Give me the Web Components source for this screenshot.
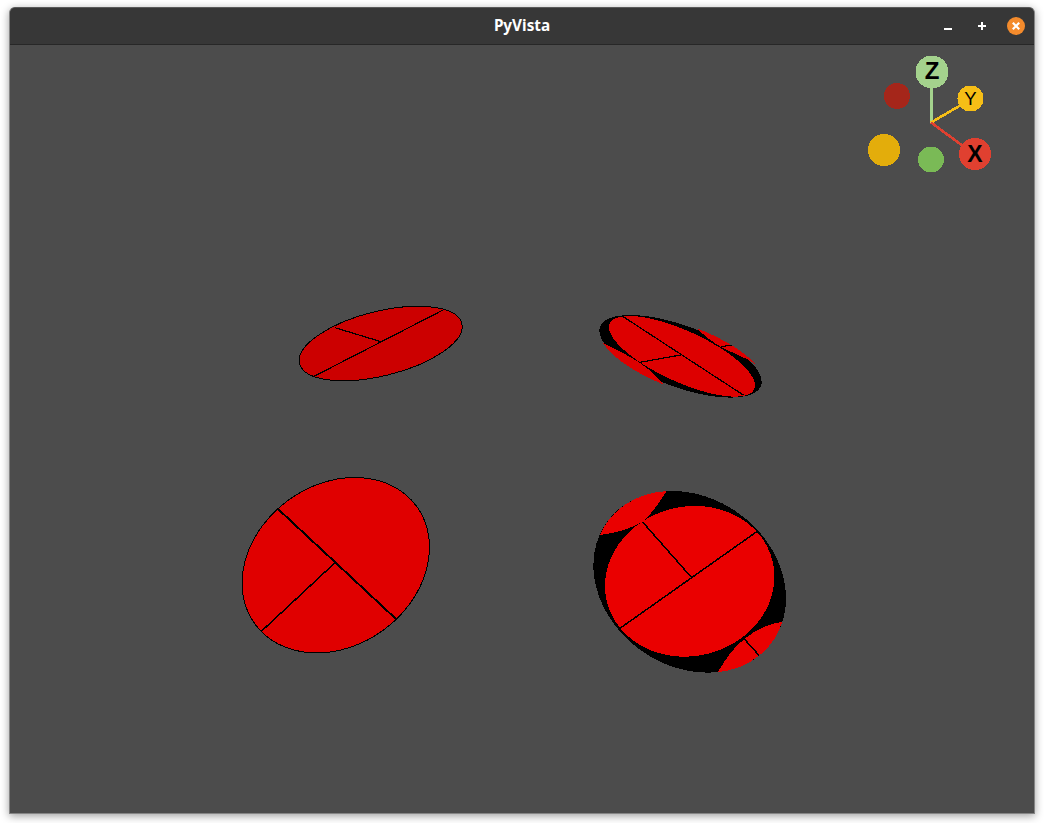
<!DOCTYPE html>
<html>
<head>
<meta charset="utf-8">
<title>PyVista</title>
<style>
  html, body { margin: 0; padding: 0; background: #fff; }
</style>
</head>
<body>
<app-window heading="PyVista">
  <plot-view></plot-view>
</app-window>

<script>
class TitleBar extends HTMLElement {
  constructor() {
    super();
    this.shadowDOM = this.attachShadow({mode: "open"});
  }

  connectedCallback() {
    this.render();
  }

  render() {
    this.shadowDOM.innerHTML = `
    <style>
      :host {
        display: grid;
        grid-template-columns: 1fr auto 1fr;
        align-items: center;
        height: 37px;
        box-sizing: border-box;
        background: #373737;
        border-bottom: 1px solid #272727;
        border-radius: 5px 5px 0 0;
        font: 700 15.3px "Noto Sans", sans-serif;
        color: #fff;
      }
      .title { grid-column: 2; margin-top: -2px; }
      .buttons {
        grid-column: 3;
        justify-self: end;
        display: flex;
        align-items: center;
        gap: 14px;
        padding-right: 8px;
      }
      .btn { display: block; width: 20px; height: 20px; }
    </style>
    <div class="title">${this.getAttribute("heading")}</div>
    <div class="buttons">
      <svg class="btn" viewBox="0 0 20 20"><rect x="6" y="12" width="8" height="2" fill="#fff"/></svg>
      <svg class="btn" viewBox="0 0 20 20"><path d="M6 10h8M10 6v8" stroke="#fff" stroke-width="2"/></svg>
      <svg class="btn" viewBox="0 0 20 20">
        <circle cx="10" cy="10" r="9" fill="#f48b2c"/>
        <path d="M6.8 6.8l6.4 6.4M13.2 6.8l-6.4 6.4" stroke="#fff" stroke-width="2.2"/>
      </svg>
    </div>
    `;
  }
}

class AppWindow extends HTMLElement {
  constructor() {
    super();
    this.shadowDOM = this.attachShadow({mode: "open"});
  }

  connectedCallback() {
    this.render();
  }

  render() {
    this.shadowDOM.innerHTML = `
    <style>
      :host {
        display: block;
        padding: 7px 9px 9px 9px;
        height: 823px;
        box-sizing: border-box;
      }
      .frame {
        display: flex;
        flex-direction: column;
        height: 807px;
        box-sizing: border-box;
        border: 1px solid #858585;
        border-top-color: #5a5a5a;
        border-radius: 6px 6px 0 0;
        background: #4c4c4c;
        box-shadow: 0 2px 9px rgba(0, 0, 0, .38);
      }
      ::slotted(*) { flex: 1; }
    </style>
    <div class="frame">
      <title-bar heading="${this.getAttribute("heading")}"></title-bar>
      <slot></slot>
    </div>
    `;
  }
}

class AxesWidget extends HTMLElement {
  constructor() {
    super();
    this.shadowDOM = this.attachShadow({mode: "open"});
  }

  connectedCallback() {
    this.render();
  }

  render() {
    // svg box starts at 860,50 in page coords
    this.shadowDOM.innerHTML = `
    <style>
      :host { position: absolute; top: 5px; right: 34px; width: 140px; height: 130px; }
      svg { display: block; }
      text { font-family: "Liberation Sans", sans-serif; fill: #000; text-anchor: middle; }
    </style>
    <svg width="140" height="130" viewBox="860 50 140 130" shape-rendering="crispEdges">
      <line x1="931" y1="122.5" x2="931" y2="88" stroke="#a4d28d" stroke-width="3"/>
      <line x1="931" y1="122.5" x2="961" y2="105" stroke="#f6be16" stroke-width="2.6"/>
      <line x1="931" y1="122.5" x2="963" y2="146" stroke="#e04030" stroke-width="2.6"/>
      <circle cx="897" cy="96" r="13" fill="#a5261a"/>
      <circle cx="884" cy="150" r="16" fill="#e3ad0b"/>
      <circle cx="931" cy="159.5" r="13" fill="#7aba56"/>
      <circle cx="932" cy="72" r="16.5" fill="#a4d28d"/>
      <circle cx="970.5" cy="98.5" r="13" fill="#f6be16"/>
      <circle cx="975" cy="154" r="16" fill="#e04030"/>
      <text x="932" y="78.5" font-size="24" font-weight="700">Z</text>
      <text x="970.5" y="105" font-size="18.5">Y</text>
      <text x="975" y="161.5" font-size="23" font-weight="700">X</text>
    </svg>
    `;
  }
}

class PlotView extends HTMLElement {
  constructor() {
    super();
    this.shadowDOM = this.attachShadow({mode: "open"});
  }

  connectedCallback() {
    this.render();
  }

  render() {
    // viewBox is in page coords so the numbers can be read off the screenshot
    this.shadowDOM.innerHTML = `
    <style>
      :host { display: block; position: relative; background: #4c4c4c; }
      svg.scene { display: block; }
    </style>
    <svg class="scene" width="1024" height="768" viewBox="10 45 1024 768" shape-rendering="crispEdges">
      <!-- top left -->
      <ellipse cx="380.7" cy="343.5" rx="83.6" ry="32.3" transform="rotate(-13.9 380.7 343.5)" fill="#cc0000" stroke="#000"/>
      <path d="M313.3 376.7L445 309M335 327.7L381 341.7" stroke="#000" fill="none" stroke-width="1.2"/>

      <!-- top right -->
      <ellipse cx="680.5" cy="356.3" rx="85.7" ry="30.8" transform="rotate(20.1 680.5 356.3)" fill="#000"/>
      <path d="M603.3 343.3C615 348.3 630 356.7 640 363C648.3 368.3 656.7 376.7 663.3 384.3A85.7 30.8 20.1 0 1 603.3 343.3Z" fill="#dd0000"/>
      <path d="M696.7 328.3C705 336 712 342 720.7 346.7C730 352 745 357 755.7 364.3A85.7 30.8 20.1 0 0 696.7 328.3Z" fill="#dd0000"/>
      <ellipse cx="682" cy="356.3" rx="79.4" ry="25.6" transform="rotate(24.5 682 356.3)" fill="#dd0000"/>
      <path d="M621.7 315.7L743.3 395M680.7 355L640 362.3M720.7 346.7L732.3 345" stroke="#000" fill="none" stroke-width="1.2"/>

      <!-- bottom left -->
      <ellipse cx="335.8" cy="565.2" rx="100" ry="80.5" transform="rotate(-36 335.8 565.2)" fill="#e00000" stroke="#000"/>
      <path d="M277.3 508.3L396 619" stroke="#000" fill="none" stroke-width="2"/>
      <path d="M335 562.7L261.7 631" stroke="#000" fill="none" stroke-width="1.5"/>

      <!-- bottom right -->
      <ellipse cx="689.7" cy="581.8" rx="102.1" ry="84.2" transform="rotate(36 689.7 581.8)" fill="#000"/>
      <path d="M600 535C615 533 631 529 642.3 521.7C652 514 659 503 666.7 491A102.1 84.2 36 0 0 600 535Z" fill="#ea0000"/>
      <path d="M782.3 621.7C768 624 755 630 744.3 639C733 648 725 660 717.7 672.3A102.1 84.2 36 0 0 782.3 621.7Z" fill="#ea0000"/>
      <ellipse cx="689.7" cy="581.3" rx="85.3" ry="74.7" transform="rotate(-13.9 689.7 581.3)" fill="#ea0000"/>
      <path d="M620 628.3L756.7 531.7M691.7 577.7L642.3 521.7M744.3 639L759.3 655.7" stroke="#000" fill="none" stroke-width="1.5"/>
    </svg>
    <axes-widget></axes-widget>
    `;
  }
}

customElements.define("title-bar", TitleBar);
customElements.define("app-window", AppWindow);
customElements.define("axes-widget", AxesWidget);
customElements.define("plot-view", PlotView);
</script>
</body>
</html>
